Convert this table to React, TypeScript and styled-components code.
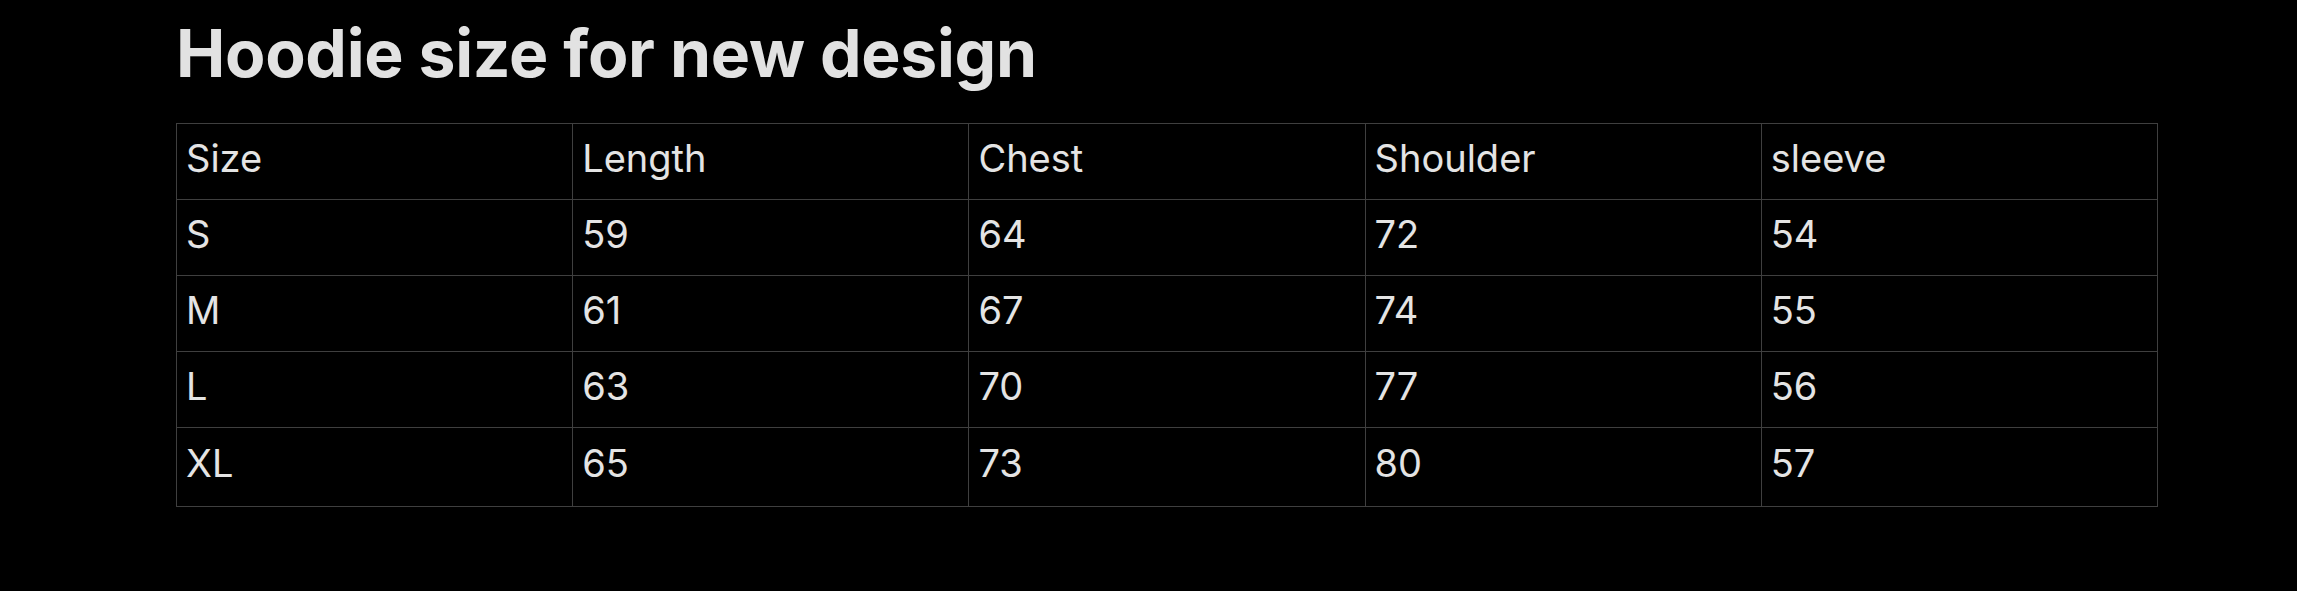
import styled, { createGlobalStyle } from "styled-components";

const GlobalStyle = createGlobalStyle`
    html, body {
        margin: 0;
        padding: 0;
        background: #000;
    }
`

const Page = styled.div`
    width: 2297px;
    height: 591px;
    box-sizing: border-box;
    padding: 20px 0 0 176px;
    background: #000;
    color: #e4e4e4;
    font-family: Inter, "Liberation Sans", sans-serif;
`

const Title = styled.h1`
    margin: 0 0 37px 0;
    font-size: 66px;
    line-height: 66px;
    font-weight: 700;
    letter-spacing: -0.3px;
    color: #e2e2e2;
`

const SizeTable = styled.table`
    width: 1982px;
    table-layout: fixed;
    border-collapse: collapse;
    font-size: 38px;
    color: #e4e4e4;
`

const Cell = styled.td<{ $last?: boolean }>`
    height: ${p => (p.$last ? 70 : 67)}px;
    padding: 0 0 8px 9px;
    border: 1px solid #3f3f3f;
    text-align: left;
    vertical-align: middle;
    font-weight: 400;
`

const headers = ["Size", "Length", "Chest", "Shoulder", "sleeve"];

const rows = [
    ["S", "59", "64", "72", "54"],
    ["M", "61", "67", "74", "55"],
    ["L", "63", "70", "77", "56"],
    ["XL", "65", "73", "80", "57"],
];

const App = (): JSX.Element => {
    return (
        <Page>
            <GlobalStyle />
            <Title>Hoodie size for new design</Title>
            <SizeTable>
                <tbody>
                    <tr>
                        {headers.map(h => (
                            <Cell key={h}>{h}</Cell>
                        ))}
                    </tr>
                    {rows.map((row, i) => (
                        <tr key={row[0]}>
                            {row.map((v, j) => (
                                <Cell key={j} $last={i === rows.length - 1}>{v}</Cell>
                            ))}
                        </tr>
                    ))}
                </tbody>
            </SizeTable>
        </Page>
    )
};

export default App
